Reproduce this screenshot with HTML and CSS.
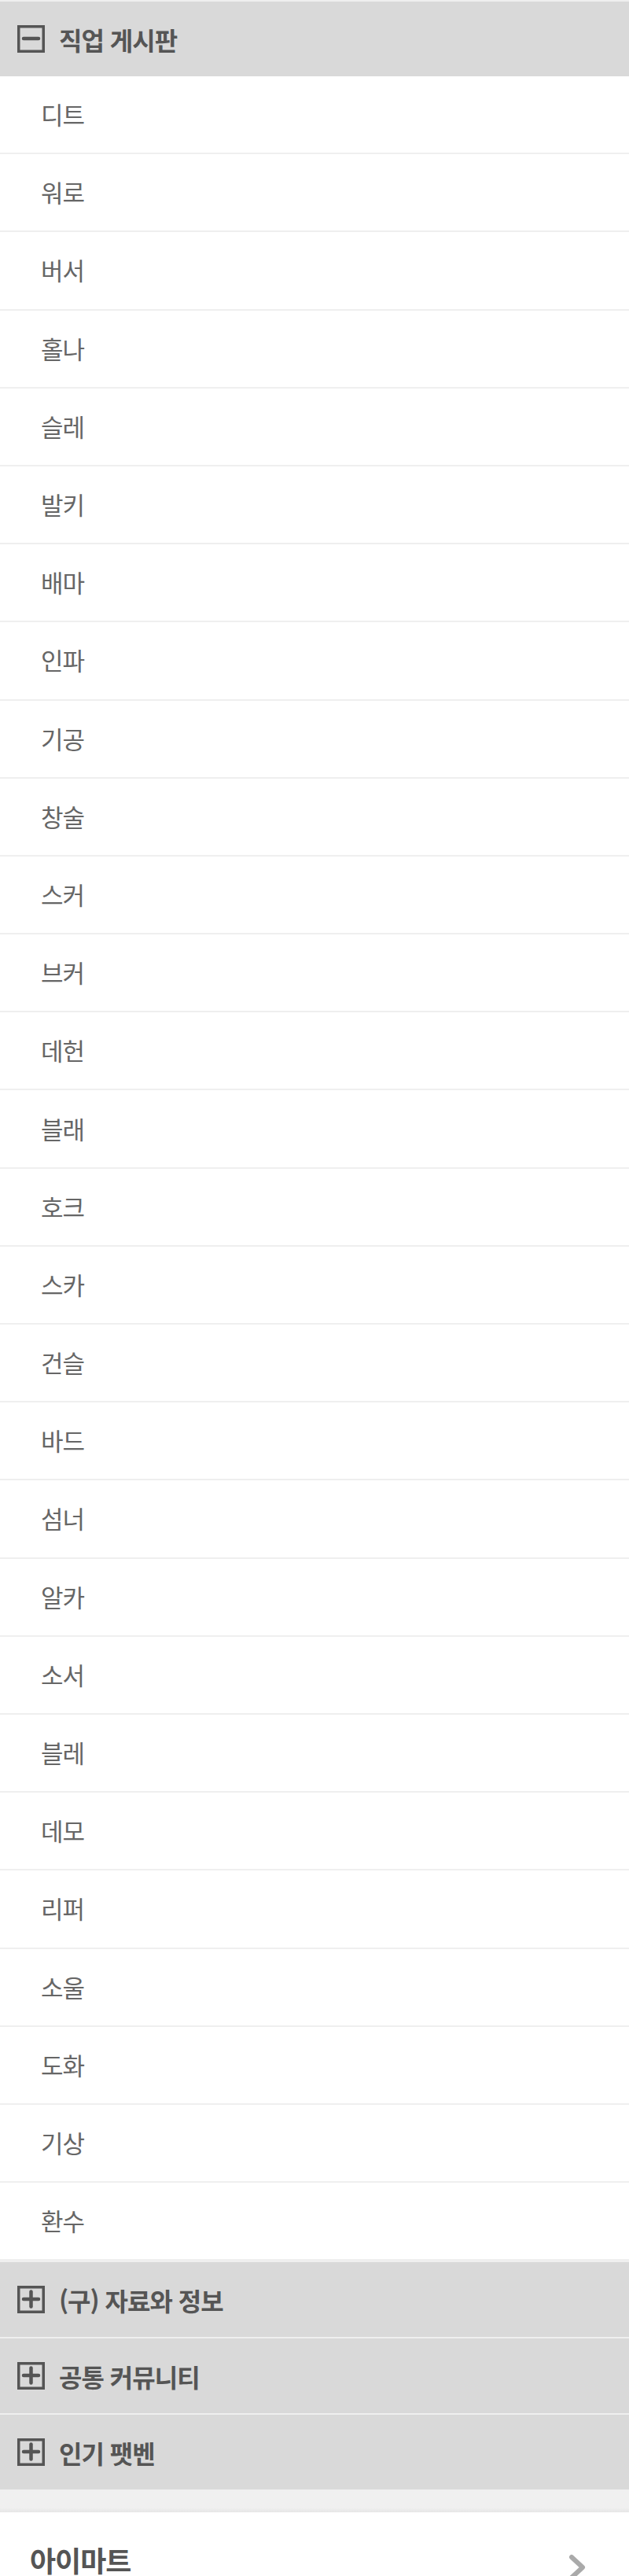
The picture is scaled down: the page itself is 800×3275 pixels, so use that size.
FILE: index.html
```html
<!DOCTYPE html>
<html lang="ko">
<head>
    <meta charset="UTF-8">
    <meta name="viewport" content="width=device-width, initial-scale=1.0">
    <title>게시판 메뉴</title>
    <link rel="stylesheet" href="styles.css">
</head>
<body>

    <!-- Board menu -->
    <div class="menu">
        <div class="group open">
            <div class="group-head">
                <svg class="toggle-icon" viewBox="0 0 35 35">
                    <rect x="1.75" y="1.75" width="31.5" height="31.5" />
                    <line x1="8" y1="17" x2="27" y2="17" />
                </svg>
                <span>직업 게시판</span>
            </div>
            <ul class="board-list">
                <li>디트</li>
                <li>워로</li>
                <li>버서</li>
                <li>홀나</li>
                <li>슬레</li>
                <li>발키</li>
                <li>배마</li>
                <li>인파</li>
                <li>기공</li>
                <li>창술</li>
                <li>스커</li>
                <li>브커</li>
                <li>데헌</li>
                <li>블래</li>
                <li>호크</li>
                <li>스카</li>
                <li>건슬</li>
                <li>바드</li>
                <li>섬너</li>
                <li>알카</li>
                <li>소서</li>
                <li>블레</li>
                <li>데모</li>
                <li>리퍼</li>
                <li>소울</li>
                <li>도화</li>
                <li>기상</li>
                <li>환수</li>
            </ul>
        </div>

        <div class="group">
            <div class="group-head">
                <svg class="toggle-icon" viewBox="0 0 35 35">
                    <rect x="1.75" y="1.75" width="31.5" height="31.5" />
                    <line x1="8" y1="17" x2="27" y2="17" />
                    <line x1="17.5" y1="7.5" x2="17.5" y2="26.5" />
                </svg>
                <span>(구) 자료와 정보</span>
            </div>
        </div>

        <div class="group">
            <div class="group-head">
                <svg class="toggle-icon" viewBox="0 0 35 35">
                    <rect x="1.75" y="1.75" width="31.5" height="31.5" />
                    <line x1="8" y1="17" x2="27" y2="17" />
                    <line x1="17.5" y1="7.5" x2="17.5" y2="26.5" />
                </svg>
                <span>공통 커뮤니티</span>
            </div>
        </div>

        <div class="group">
            <div class="group-head">
                <svg class="toggle-icon" viewBox="0 0 35 35">
                    <rect x="1.75" y="1.75" width="31.5" height="31.5" />
                    <line x1="8" y1="17" x2="27" y2="17" />
                    <line x1="17.5" y1="7.5" x2="17.5" y2="26.5" />
                </svg>
                <span>인기 팻벤</span>
            </div>
        </div>
    </div>

    <div class="divider"></div>

    <!-- Shop link -->
    <a class="shop-row" href="#">
        <span>아이마트</span>
        <svg class="chevron" viewBox="0 0 30 34">
            <polyline points="7,4 21,17 7,30" />
        </svg>
    </a>

</body>
</html>
```

FILE: styles.css
```css
body {
    margin: 0;
    padding: 0;
    background-color: #fff;
    color: #555;
    font-family: 'Noto Sans CJK KR', 'Noto Sans', sans-serif;
}

/* Group headers */
.group-head {
    display: flex;
    align-items: center;
    gap: 18px;
    height: 95px;
    padding-left: 22px;
    background-color: #d9d9d9;
    border-top: 2px solid #efefef;
    font-size: 32px;
    font-weight: bold;
    letter-spacing: -1px;
    color: #555;
}

.toggle-icon {
    width: 35px;
    height: 35px;
    flex-shrink: 0;
}

.toggle-icon rect {
    fill: none;
    stroke: #555;
    stroke-width: 3.5;
}

.toggle-icon line {
    stroke: #555;
    stroke-width: 4.5;
    stroke-linecap: round;
}

/* Board list */
.board-list {
    list-style: none;
    margin: 0;
    padding: 0;
}

.board-list li {
    display: flex;
    align-items: center;
    box-sizing: border-box;
    height: 99.2px;
    padding: 0 0 2px 52px;
    border-bottom: 2px solid #efefef;
    font-size: 31px;
    letter-spacing: -1px;
    color: #666;
}

/* Spacer strip */
.divider {
    height: 29px;
    background: linear-gradient(#f0f0f0 80%, #e6e6e6);
}

/* Shop row */
.shop-row {
    display: flex;
    align-items: center;
    justify-content: space-between;
    height: 120px;
    padding: 0 50px 0 38px;
    text-decoration: none;
    color: #555;
    font-size: 36px;
    font-weight: bold;
    letter-spacing: -1px;
}

.chevron {
    width: 30px;
    height: 34px;
    margin-top: 20px;
}

.chevron polyline {
    fill: none;
    stroke: #aaa;
    stroke-width: 6;
    stroke-linecap: round;
    stroke-linejoin: round;
}
```
